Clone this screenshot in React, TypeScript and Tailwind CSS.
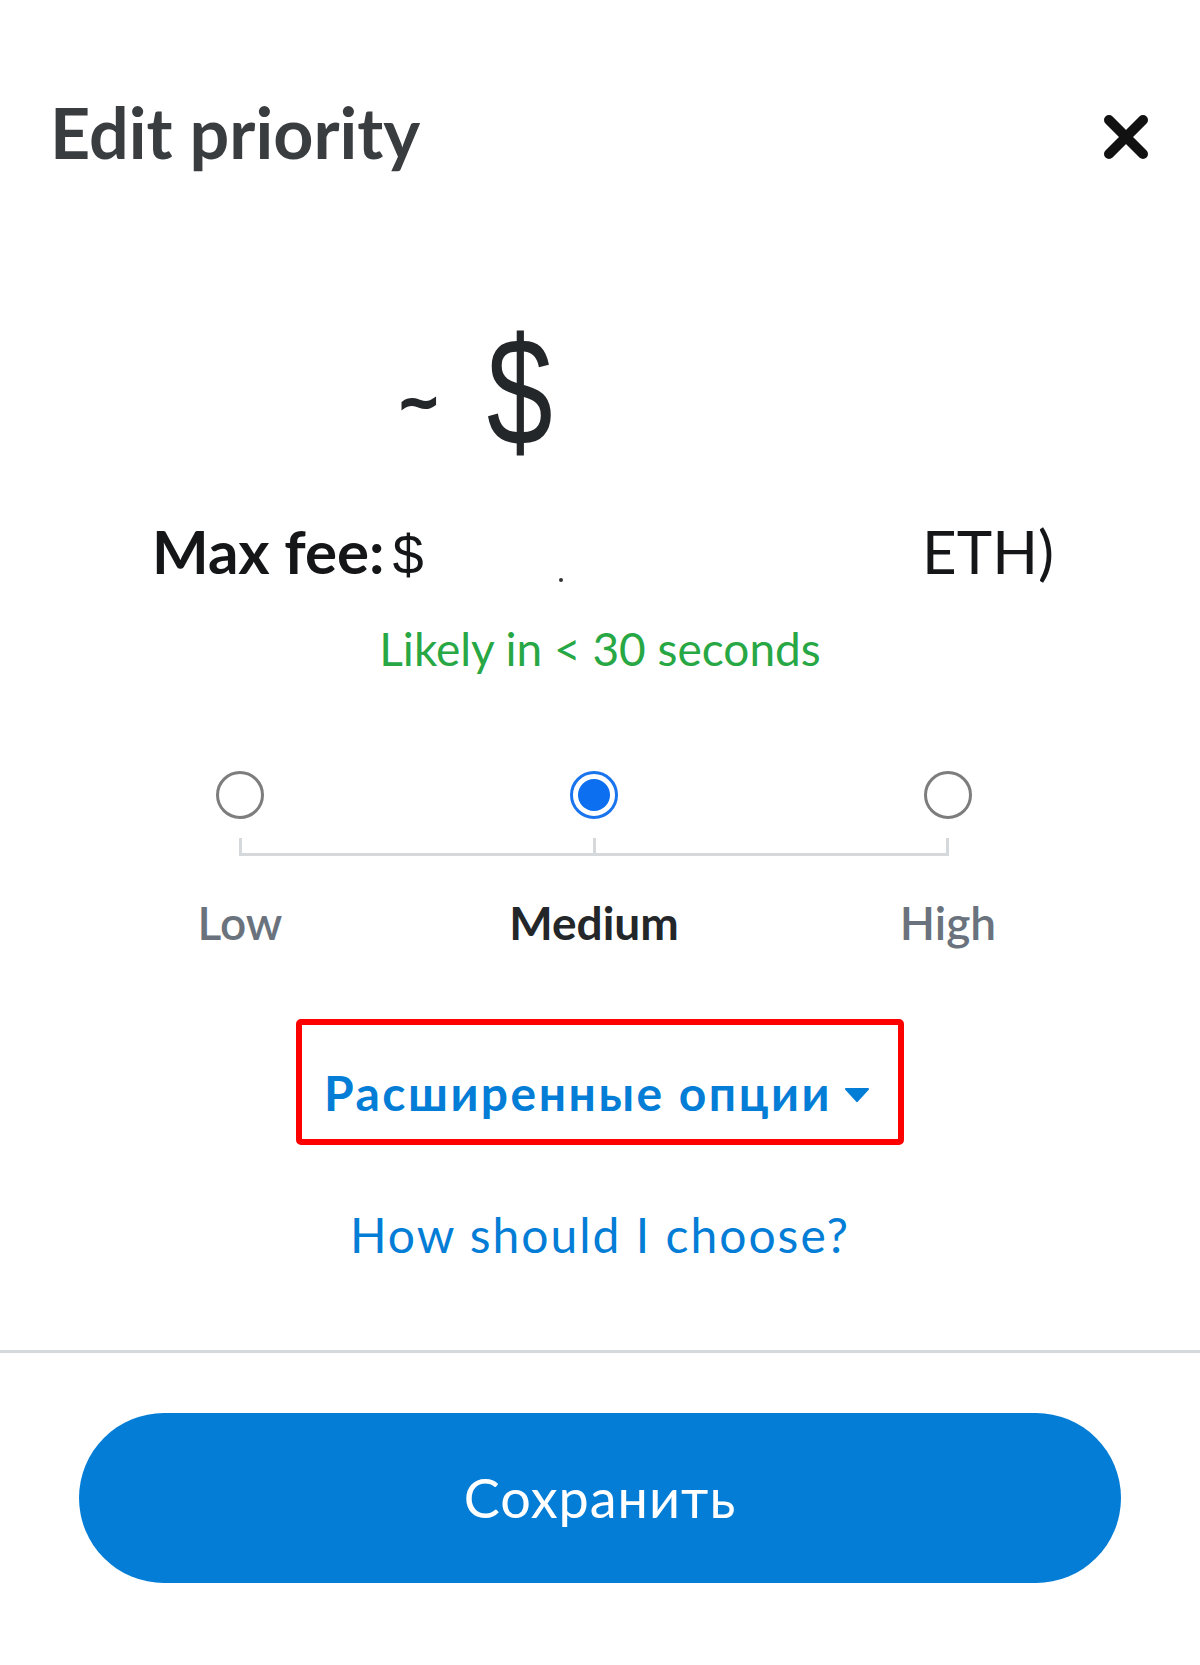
import React from "react";

const levels = [
  { label: "Low", active: false },
  { label: "Medium", active: true },
  { label: "High", active: false },
];

function Radio({ active }: { active: boolean }) {
  if (active) {
    return (
      <div className="flex h-[48px] w-[48px] items-center justify-center rounded-full border-[3px] border-[#1a74ee] bg-white">
        <div className="h-[32px] w-[32px] rounded-full bg-[#0b6ff0]" />
      </div>
    );
  }
  return <div className="h-[48px] w-[48px] rounded-full border-[3px] border-[#7d7d7d] bg-white" />;
}

export default function App() {
  return (
    <div className="flex h-[1665px] w-[1200px] flex-col bg-white font-['Lato',sans-serif]">
      {/* шапка */}
      <div className="flex items-start justify-between pl-[50px] pr-[51px] pt-[97px]">
        <h1 className="text-[70px] font-bold leading-none text-[#3a3d40]">Edit priority</h1>
        <svg className="mt-[18px]" width="46" height="44" viewBox="0 0 46 44">
          <path d="M6 5 L40 39 M40 5 L6 39" stroke="#111" strokeWidth="10" strokeLinecap="round" />
        </svg>
      </div>

      {/* сумма */}
      <div className="mt-[156px] flex h-[138px] items-center pl-[397px]">
        <span className="mt-[20px] font-['DejaVu_Sans',sans-serif] text-[52px] font-bold leading-none text-[#24272a] [-webkit-text-stroke:2px_#24272a]">
          ~
        </span>
        <span className="ml-[36px] inline-block scale-x-[0.77] font-['Liberation_Sans',sans-serif] text-[154px] leading-none text-[#24272a]">
          $
        </span>
      </div>

      <div className="mt-[60px] flex h-[60px] items-baseline pl-[152px] text-[60px] leading-none text-[#141618]">
        <span className="font-bold">Max fee:</span>
        <span className="ml-[8px] w-[30px] font-['Liberation_Sans',sans-serif] text-[56px]">$</span>
        <span className="ml-[136px] h-[4px] w-[4px] translate-y-[1px] self-end rounded-full bg-[#333]" />
        <span className="ml-auto mr-[146px]">ETH)</span>
      </div>

      <p className="mt-[45px] text-center text-[46px] leading-none text-[#28a745]">Likely in &lt; 30 seconds</p>

      {/* уровни */}
      <div className="ml-[63px] mt-[99px] grid w-[1062px] grid-cols-3">
        {levels.map((l) => (
          <div key={l.label} className="flex justify-center">
            <Radio active={l.active} />
          </div>
        ))}
      </div>
      <div className="ml-[239px] mt-[19px] flex h-[18px] w-[710px] justify-center border-x-[3px] border-b-[3px] border-[#d6d9dc]">
        <div className="h-full w-[3px] bg-[#d6d9dc]" />
      </div>
      <div className="ml-[63px] mt-[44px] grid w-[1062px] grid-cols-3">
        {levels.map((l) => (
          <div
            key={l.label}
            className={
              l.active
                ? "text-center text-[46px] font-bold leading-none text-[#24272a]"
                : "text-center text-[46px] font-semibold leading-none text-[#6a737d]"
            }
          >
            {l.label}
          </div>
        ))}
      </div>

      {/* расширенные опции */}
      <div className="ml-[296px] mt-[73px] flex h-[126px] w-[608px] items-center rounded-[5px] border-[6px] border-[#ff0000] pl-[22px] pt-[22px]">
        <span className="text-[48px] font-bold leading-none tracking-[2.5px] text-[#037dd6]">Расширенные опции</span>
        <svg className="ml-[12px] mt-[4px]" width="26" height="14" viewBox="0 0 26 14">
          <path d="M2 1 H24 L13 13 Z" fill="#037dd6" stroke="#037dd6" strokeWidth="2" strokeLinejoin="round" />
        </svg>
      </div>

      <p className="mt-[66px] text-center text-[48px] leading-none tracking-[2px] text-[#037dd6]">How should I choose?</p>

      <div className="mt-[91px] h-[3px] w-full bg-[#d6d9dc]" />

      <button className="mx-[79px] mt-[60px] flex h-[170px] items-center justify-center rounded-full bg-[#037dd6] text-[54px] leading-none tracking-[1px] text-white">
        Сохранить
      </button>
    </div>
  );
}
